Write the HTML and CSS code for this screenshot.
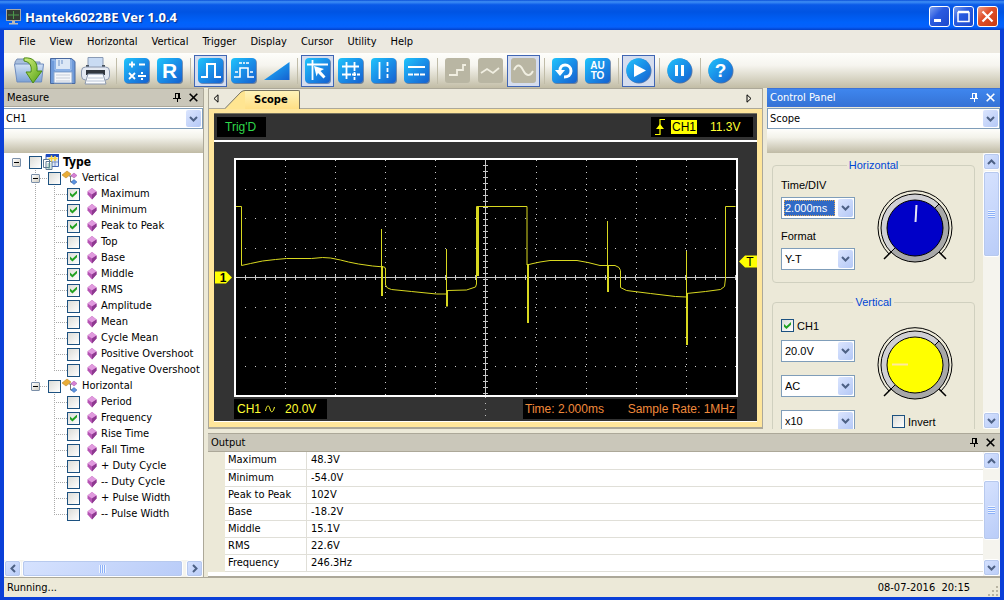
FILE: index.html
```html
<!DOCTYPE html>
<html lang="en">
<head>
    <meta charset="UTF-8">
    <meta name="viewport" content="width=device-width, initial-scale=1.0">
    <title>Hantek6022BE Ver 1.0.4</title>
    <link rel="stylesheet" href="styles.css">
</head>
<body>
    <!-- shared symbols -->
    <svg class="sprite" width="0" height="0">
        <defs>
            <linearGradient id="blue" x1="0" y1="0" x2="1" y2="1">
                <stop offset="0" stop-color="#1fc4fb"/>
                <stop offset="0.5" stop-color="#1a8fe8"/>
                <stop offset="1" stop-color="#1560cf"/>
            </linearGradient>
            <linearGradient id="folderFill" x1="0" y1="0" x2="0" y2="1">
                <stop offset="0" stop-color="#d3e3f6"/>
                <stop offset="1" stop-color="#7ba1d6"/>
            </linearGradient>
            <linearGradient id="greenFill" x1="0" y1="0" x2="1" y2="1">
                <stop offset="0" stop-color="#d4ef7c"/>
                <stop offset="1" stop-color="#4fa012"/>
            </linearGradient>
            <linearGradient id="ring" x1="0" y1="0" x2="1" y2="1">
                <stop offset="0.49" stop-color="#d0d0d4"/>
                <stop offset="0.51" stop-color="#a8a8a8"/>
            </linearGradient>
            <symbol id="chev-down" viewBox="0 0 9 6"><path d="M1 1l3.500 3.500L8 1" fill="none" stroke="#4d6185" stroke-width="2"/></symbol>
            <symbol id="chev-up" viewBox="0 0 9 6"><path d="M1 5l3.500-3.500L8 5" fill="none" stroke="#4d6185" stroke-width="2"/></symbol>
            <symbol id="chev-left" viewBox="0 0 6 9"><path d="M5 1L1.500 4.500L5 8" fill="none" stroke="#4d6185" stroke-width="2"/></symbol>
            <symbol id="chev-right" viewBox="0 0 6 9"><path d="M1 1l3.500 3.500L1 8" fill="none" stroke="#4d6185" stroke-width="2"/></symbol>
            <symbol id="pin" viewBox="0 0 9 9"><path d="M2.500 0v5M2 .5h4M0 5.500h8M4.500 6v3" fill="none" stroke="currentColor"/><path d="M5 0h2v5H5z" fill="currentColor"/></symbol>
            <symbol id="cross" viewBox="0 0 9 9"><path d="M.7.7l7.600 7.600M8.300.7L.7 8.300" fill="none" stroke="currentColor" stroke-width="1.600"/></symbol>
            <symbol id="gem" viewBox="0 0 10 12">
                <path d="M5 0l4.500 3.500v3L5 11.500.5 6.500v-3z" fill="#b653b4"/>
                <path d="M5 0l4.500 3.500L5 6.500.5 3.500z" fill="#e09ade"/>
                <path d="M5 6.500l4.500-3v3L5 11.500z" fill="#8d3a90"/>
            </symbol>
            <symbol id="group" viewBox="0 0 16 16">
                <path d="M0 5l5-4 4 3-5 4z" fill="#e9ad38" stroke="#b9862a" stroke-width=".6"/>
                <path d="M7 6h3M8.500 6v6h2.500" fill="none" stroke="#777"/>
                <path d="M12 3l3 2.500-3 2.500-3-2.500z" fill="#d77fd4" stroke="#a24ea4" stroke-width=".5"/>
                <path d="M12 9.500l3 2.500-3 2.500-3-2.500z" fill="#5d93e0" stroke="#2c5ea9" stroke-width=".5"/>
            </symbol>
            <symbol id="types" viewBox="0 0 16 16">
                <path d="M3 .5h12.500v12H3z" fill="#dfe9fb" stroke="#4466b5"/>
                <path d="M3 0h13v3H3z" fill="#1c4bc0"/>
                <path d="M8.500 3v9M12 3v9M5 8h10" stroke="#8092c4"/>
                <path d="M.5 5.500h6v8h-6zM3 7.500h6v8H3z" fill="#fff" stroke="#5c7893"/>
                <path d="M4.500 10h3M4.500 12h3M4.500 14h3" stroke="#5b9a8d"/>
                <path d="M8.500 1.500v6M5.500 4.500h9M12 2v5" stroke="#ffd83a" stroke-width="1.500"/>
            </symbol>
            <symbol id="tile" viewBox="0 0 26 26"><rect x="1" y="1" width="25" height="25" rx="4" fill="#27508e" opacity=".6"/><rect width="25" height="25" rx="4" fill="url(#blue)"/></symbol>
            <symbol id="tile-off" viewBox="0 0 26 26"><rect width="25" height="25" rx="3" fill="#b9b6a3"/></symbol>
            <symbol id="disc" viewBox="0 0 26 26"><circle cx="13" cy="13" r="12.500" fill="#27508e" opacity=".7"/><circle cx="12.500" cy="12.500" r="12.200" fill="url(#blue)"/></symbol>
        </defs>
    </svg>

    <div class="window">
        <header class="titlebar">
            <svg class="app-icon" viewBox="0 0 16 16">
                <rect x=".5" y=".5" width="14" height="11" fill="#333c33" stroke="#a9a9a9"/>
                <path d="M2 6h11M7.500 2v8" stroke="#4c9a4c"/>
                <path d="M6 12h3v2h3v1.500H3V14h3z" fill="#bbb"/>
            </svg>
            <h1>Hantek6022BE Ver 1.0.4</h1>
            <button type="button" class="win-btn" aria-label="Minimize"><svg viewBox="0 0 19 19"><path d="M4 12h7v3H4z" fill="#fff"/></svg></button>
            <button type="button" class="win-btn" aria-label="Maximize"><svg viewBox="0 0 19 19"><path d="M4 5.500h11v9H4zM4 4.500h11" fill="none" stroke="#fff" stroke-width="1.500"/></svg></button>
            <button type="button" class="win-btn close" aria-label="Close"><svg viewBox="0 0 19 19"><path d="M4.500 4.500l10 10M14.500 4.500l-10 10" fill="none" stroke="#fff" stroke-width="2.200"/></svg></button>
        </header>

        <nav class="menubar">
            <button type="button">File</button>
            <button type="button">View</button>
            <button type="button">Horizontal</button>
            <button type="button">Vertical</button>
            <button type="button">Trigger</button>
            <button type="button">Display</button>
            <button type="button">Cursor</button>
            <button type="button">Utility</button>
            <button type="button">Help</button>
        </nav>

        <div class="toolbar">
            <button type="button" class="tool wide" aria-label="Open">
                <svg viewBox="0 0 31 28">
                    <path d="M1 5l2-3h8l2 3h13v4H1z" fill="#a9bfdd" stroke="#7990b6"/>
                    <path d="M.5 7h29l-2 18H3z" fill="url(#folderFill)" stroke="#6f8cbd"/>
                    <path d="M10 1c9-1 14 4 13 13h5l-9 12-7-11h5c1-6-1-10-7-11z" fill="url(#greenFill)" stroke="#4b8a16"/>
                </svg>
            </button>
            <button type="button" class="tool" aria-label="Save">
                <svg viewBox="0 0 26 26">
                    <path d="M.5.500h21l3.500 3v22H.5z" fill="#6f9bdb" stroke="#49699f"/>
                    <path d="M2 2h3v10h16V2" fill="none" stroke="#a9c7f0"/>
                    <path d="M6 1h14v10H6z" fill="#dce8f6"/><path d="M9 2v6M12 2v4" stroke="#6c92c8"/>
                    <path d="M4 14h18v11H4z" fill="#f4f6fa" stroke="#8ba6cb"/>
                    <path d="M6 17h14M6 20h14M6 23h14" stroke="#c5ccd8"/>
                </svg>
            </button>
            <button type="button" class="tool wide" aria-label="Print">
                <svg viewBox="0 0 31 28">
                    <path d="M8 .5h15v10H8z" fill="#c9dbf3" stroke="#8a9bb5"/>
                    <path d="M6 8h3v4H6zM22 8h3v4h-3z" fill="#4a5560"/>
                    <rect x="1.500" y="10" width="28" height="13" rx="4" fill="#e4e9f2" stroke="#8c98ae"/>
                    <path d="M6 13h19v5H6z" fill="#30363f"/>
                    <path d="M8 17h15l3 10H5z" fill="#fafcff" stroke="#8b98ad"/>
                    <path d="M8 21h15M7 24h17" stroke="#b9c4d6"/>
                </svg>
            </button>
            <span class="sep"></span>
            <button type="button" class="tool" aria-label="Math">
                <svg viewBox="0 0 26 26"><use href="#tile"/><path d="M5 6.500h6M8 3.500v6M15 6.500h6M5 15l6 6M11 15l-6 6M14 18h8" stroke="#fff" stroke-width="1.800"/><path d="M17 14h2v2h-2zM17 20h2v2h-2z" fill="#fff"/></svg>
            </button>
            <button type="button" class="tool" aria-label="Reference">
                <svg viewBox="0 0 26 26"><use href="#tile"/><text x="12.500" y="20" class="glyph-r">R</text></svg>
            </button>
            <span class="sep"></span>
            <button type="button" class="tool on" aria-label="Pulse">
                <svg viewBox="0 0 26 26"><use href="#tile"/><path d="M3 19h6V6h8v13h6" fill="none" stroke="#fff" stroke-width="2"/></svg>
            </button>
            <button type="button" class="tool" aria-label="Dual pulse">
                <svg viewBox="0 0 26 26"><use href="#tile"/><path d="M3 19h6v-9h8v9h6M8 5h3M12 5h2M15 5h3M4 14h3M19 14h3" fill="none" stroke="#fff" stroke-width="1.600"/></svg>
            </button>
            <button type="button" class="tool" aria-label="Ramp">
                <svg viewBox="0 0 26 26"><path d="M25.500 4v18H0z" fill="url(#blue)"/></svg>
            </button>
            <span class="sep"></span>
            <button type="button" class="tool on" aria-label="Cursor tracking">
                <svg viewBox="0 0 26 26"><use href="#tile"/><path d="M2 6.500h21M7.500 2v20" stroke="#fff" stroke-width="1.800"/><path d="M9 8l10 3-3.500 2 5 5.500-2 2-5.500-5.500-1.500 3.500z" fill="#fff"/></svg>
            </button>
            <button type="button" class="tool" aria-label="Cross cursor">
                <svg viewBox="0 0 26 26"><use href="#tile"/><path d="M4 8.500h17M8.500 4v17" stroke="#fff" stroke-width="1.800"/><path d="M4 16.500h18M16.500 4v18" stroke="#fff" stroke-width="1.800" stroke-dasharray="4 1"/></svg>
            </button>
            <button type="button" class="tool" aria-label="Vertical cursor">
                <svg viewBox="0 0 26 26"><use href="#tile"/><path d="M8.500 4v17" stroke="#fff" stroke-width="1.800"/><path d="M16.500 4v18" stroke="#fff" stroke-width="1.800" stroke-dasharray="4 2"/></svg>
            </button>
            <button type="button" class="tool" aria-label="Horizontal cursor">
                <svg viewBox="0 0 26 26"><use href="#tile"/><path d="M4 9h17" stroke="#fff" stroke-width="2"/><path d="M4 16.500h17" stroke="#fff" stroke-width="1.800" stroke-dasharray="5 1"/></svg>
            </button>
            <span class="sep"></span>
            <button type="button" class="tool" aria-label="Step">
                <svg viewBox="0 0 26 26"><use href="#tile-off"/><path d="M4 17h8v-5h6V7h3" fill="none" stroke="#f1efe2" stroke-width="1.800"/></svg>
            </button>
            <button type="button" class="tool" aria-label="Linear">
                <svg viewBox="0 0 26 26"><use href="#tile-off"/><path d="M3 15l6-4 6 4 6-5" fill="none" stroke="#f1efe2" stroke-width="1.800"/></svg>
            </button>
            <button type="button" class="tool on" aria-label="Sine">
                <svg viewBox="0 0 26 26"><use href="#tile-off"/><path d="M3 12c3-6 6-6 9 0s7 7 10 1" fill="none" stroke="#f1efe2" stroke-width="1.800"/></svg>
            </button>
            <span class="sep"></span>
            <button type="button" class="tool" aria-label="Restore">
                <svg viewBox="0 0 26 26"><use href="#tile"/><path d="M8 13c-1-8 11-8 11 0 0 4-3 6-7 6" fill="none" stroke="#fff" stroke-width="3"/><path d="M3 12h10l-5 6z" fill="#fff"/></svg>
            </button>
            <button type="button" class="tool" aria-label="Auto set">
                <svg viewBox="0 0 26 26"><use href="#tile"/><text x="12.500" y="11" class="glyph-auto">AU</text><text x="12.500" y="21" class="glyph-auto">TO</text></svg>
            </button>
            <span class="sep"></span>
            <button type="button" class="tool on" aria-label="Start">
                <svg viewBox="0 0 26 26"><use href="#disc"/><path d="M8 6l12 6.500L8 19z" fill="#fff"/></svg>
            </button>
            <span class="sep"></span>
            <button type="button" class="tool" aria-label="Pause">
                <svg viewBox="0 0 26 26"><use href="#disc"/><path d="M8 7h3v11H8zM14 7h3v11h-3z" fill="#fff"/></svg>
            </button>
            <span class="sep"></span>
            <button type="button" class="tool" aria-label="Help">
                <svg viewBox="0 0 26 26"><use href="#disc"/><text x="12.500" y="19" class="glyph-help">?</text></svg>
            </button>
        </div>

        <main class="workspace">
            <section class="panel measure">
                <div class="panel-head">
                    <h2>Measure</h2>
                    <button type="button" aria-label="Pin"><svg viewBox="0 0 9 9"><use href="#pin"/></svg></button>
                    <button type="button" aria-label="Close"><svg viewBox="0 0 9 9"><use href="#cross"/></svg></button>
                </div>
                <div class="combo"><select aria-label="Measure channel"><option>CH1</option></select><span class="drop"><svg><use href="#chev-down"/></svg></span></div>
                <div class="strip"></div>
                <ul class="tree">
                    <li>
                        <div class="node root"><span class="expander"></span><input type="checkbox" id="type"><svg class="node-icon"><use href="#types"/></svg><label for="type">Type</label></div>
                        <ul class="groups">
                            <li>
                                <div class="node"><span class="expander"></span><input type="checkbox" id="vert"><svg class="node-icon"><use href="#group"/></svg><label for="vert">Vertical</label></div>
                                <ul class="items">
                                    <li><input type="checkbox" id="v1" checked><svg class="gem"><use href="#gem"/></svg><label for="v1">Maximum</label></li>
                                    <li><input type="checkbox" id="v2" checked><svg class="gem"><use href="#gem"/></svg><label for="v2">Minimum</label></li>
                                    <li><input type="checkbox" id="v3" checked><svg class="gem"><use href="#gem"/></svg><label for="v3">Peak to Peak</label></li>
                                    <li><input type="checkbox" id="v4"><svg class="gem"><use href="#gem"/></svg><label for="v4">Top</label></li>
                                    <li><input type="checkbox" id="v5" checked><svg class="gem"><use href="#gem"/></svg><label for="v5">Base</label></li>
                                    <li><input type="checkbox" id="v6" checked><svg class="gem"><use href="#gem"/></svg><label for="v6">Middle</label></li>
                                    <li><input type="checkbox" id="v7" checked><svg class="gem"><use href="#gem"/></svg><label for="v7">RMS</label></li>
                                    <li><input type="checkbox" id="v8"><svg class="gem"><use href="#gem"/></svg><label for="v8">Amplitude</label></li>
                                    <li><input type="checkbox" id="v9"><svg class="gem"><use href="#gem"/></svg><label for="v9">Mean</label></li>
                                    <li><input type="checkbox" id="v10"><svg class="gem"><use href="#gem"/></svg><label for="v10">Cycle Mean</label></li>
                                    <li><input type="checkbox" id="v11"><svg class="gem"><use href="#gem"/></svg><label for="v11">Positive Overshoot</label></li>
                                    <li><input type="checkbox" id="v12"><svg class="gem"><use href="#gem"/></svg><label for="v12">Negative Overshoot</label></li>
                                </ul>
                            </li>
                            <li>
                                <div class="node"><span class="expander"></span><input type="checkbox" id="horiz"><svg class="node-icon"><use href="#group"/></svg><label for="horiz">Horizontal</label></div>
                                <ul class="items">
                                    <li><input type="checkbox" id="h1"><svg class="gem"><use href="#gem"/></svg><label for="h1">Period</label></li>
                                    <li><input type="checkbox" id="h2" checked><svg class="gem"><use href="#gem"/></svg><label for="h2">Frequency</label></li>
                                    <li><input type="checkbox" id="h3"><svg class="gem"><use href="#gem"/></svg><label for="h3">Rise Time</label></li>
                                    <li><input type="checkbox" id="h4"><svg class="gem"><use href="#gem"/></svg><label for="h4">Fall Time</label></li>
                                    <li><input type="checkbox" id="h5"><svg class="gem"><use href="#gem"/></svg><label for="h5">+ Duty Cycle</label></li>
                                    <li><input type="checkbox" id="h6"><svg class="gem"><use href="#gem"/></svg><label for="h6">-- Duty Cycle</label></li>
                                    <li><input type="checkbox" id="h7"><svg class="gem"><use href="#gem"/></svg><label for="h7">+ Pulse Width</label></li>
                                    <li><input type="checkbox" id="h8"><svg class="gem"><use href="#gem"/></svg><label for="h8">-- Pulse Width</label></li>
                                </ul>
                            </li>
                        </ul>
                    </li>
                </ul>
                <div class="scroll-h">
                    <button type="button" class="scroll-btn" aria-label="Scroll left"><svg class="side"><use href="#chev-left"/></svg></button>
                    <div class="thumb"><span class="grip"></span></div>
                    <button type="button" class="scroll-btn" aria-label="Scroll right"><svg class="side"><use href="#chev-right"/></svg></button>
                </div>
            </section>

            <section class="document">
                <div class="tabs">
                    <button type="button" class="tab-arrow" aria-label="Previous tab"><svg viewBox="0 0 6 9"><path d="M5 .8v7.400L1 4.500z" fill="none" stroke="#000"/></svg></button>
                    <button type="button" class="tab">
                        <svg class="slant" viewBox="0 0 20 19"><path d="M0 19L16 2q2-1.500 4-1.500V19z" fill="#ffe591"/><path d="M0 18.500L16 2q2-1.500 4-1.500" fill="none" stroke="#77735f"/></svg>
                        <span>Scope</span>
                    </button>
                    <button type="button" class="tab-arrow next" aria-label="Next tab"><svg viewBox="0 0 6 9"><path d="M1 .8v7.400L5 4.500z" fill="none" stroke="#000"/></svg></button>
                </div>
                <div class="scope">
                    <div class="scope-top">
                        <span class="readout trig">Trig'D</span>
                        <span class="readout level">
                            <svg class="edge" viewBox="0 0 12 18"><path d="M1 16.500h5V1.500h5" fill="none" stroke="#ff0" stroke-width="1.200"/><path d="M2 11h8L6 6z" fill="#ff0"/></svg>
                            <mark>CH1</mark>
                            <span>11.3V</span>
                        </span>
                    </div>
                    <div class="scope-body">
                        <div class="gutter"><svg class="marker channel" viewBox="0 0 18 13"><path d="M1 .5h11l6 6-6 6H1z" fill="#ff0"/><text x="9" y="11">1</text></svg></div>
                        <svg class="plot" viewBox="236 160 500 235" preserveAspectRatio="none">
                            <g class="grid-v">
                                <path d="M285.500 160v235M335.500 160v235M385.500 160v235M435.500 160v235M536.500 160v235M586.500 160v235M636.500 160v235M686.500 160v235"/>
                            </g>
                            <g class="grid-h">
                                <path d="M235 189.500h501M235 218.500h501M235 248.500h501M235 307.500h501M235 337.500h501M235 366.500h501"/>
                            </g>
                            <path class="axis" d="M236 277.500h500M485.500 160v235"/>
                            <path class="ticks-x" d="M235 277.500h501"/>
                            <path class="ticks-y" d="M485.500 165v230"/>
                            <g class="trace">
                                <path d="M236 206.500h5.500v59l9-2 12-2.500 13-1.500 11-1h25l11-1 8 .5 10 2 8 2 10 2 14 2 12 1 1 2v16l2 3 4 1.500 20 2 25 2.500h11v-3.500l19-.5 9-3 1-3V206.500h50.500V265l6-1.500 7-1.500 10-1.500h27l11 2 12 3h15l4 2 1.500 3v17l6 3 24 3 25 3 11 .5v-3.500l19-2 15-2 4-3 1-8V206.500h10"/>
                                <path d="M381.500 229v37M446.500 249v45M607.500 221v44M686.500 251v45"/>
                                <path class="thick" d="M382 266v30M447 290v16.500M478 206v70M528 264v59M608 265v27M687 293v52"/>
                            </g>
                        </svg>
                        <div class="gutter right"><svg class="marker trigger" viewBox="0 0 18 13"><path d="M18 .5H6L0 6.500l6 6h12z" fill="#ff0"/><text x="11" y="11">T</text></svg></div>
                    </div>
                    <div class="scope-foot">
                        <span class="readout source">CH1 <svg viewBox="0 0 10 8"><path d="M.5 6C2-1 4 0 5 4s3 4 4.500-2" fill="none" stroke="#ff3"/></svg> <span>20.0V</span></span>
                        <span class="readout timing"><span>Time: 2.000ms</span><span>Sample Rate: 1MHz</span></span>
                    </div>
                </div>
            </section>

            <section class="panel control">
                <div class="panel-head active">
                    <h2>Control Panel</h2>
                    <button type="button" aria-label="Pin"><svg viewBox="0 0 9 9"><use href="#pin"/></svg></button>
                    <button type="button" aria-label="Close"><svg viewBox="0 0 9 9"><use href="#cross"/></svg></button>
                </div>
                <div class="combo"><select aria-label="Panel"><option>Scope</option></select><span class="drop"><svg><use href="#chev-down"/></svg></span></div>
                <div class="strip"></div>
                <div class="control-body">
                    <div class="control-content">
                        <fieldset>
                            <legend>Horizontal</legend>
                            <div class="fields horizontal-fields">
                                <label for="timediv">Time/DIV</label>
                                <div class="combo small"><select id="timediv" class="focused"><option>2.000ms</option></select><span class="drop"><svg><use href="#chev-down"/></svg></span></div>
                                <label for="format">Format</label>
                                <div class="combo small"><select id="format"><option>Y-T</option></select><span class="drop"><svg><use href="#chev-down"/></svg></span></div>
                            </div>
                            <div class="dial">
                                <svg class="knob time" viewBox="-38 -38 76 76">
                                    <path d="M-26 26A37 37 0 1 1 26 26" fill="none" stroke="#000"/>
                                    <path d="M-24 24l-7 7M24 24l7 7" stroke="#000" stroke-width="1.500"/>
                                    <circle r="34" fill="url(#ring)" stroke="#000"/>
                                    <circle r="28" fill="currentColor" stroke="#000"/>
                                    <path d="M20-20l4-4M-20 20l-4 4" stroke="#000"/>
                                    <path d="M1.500-23L.5-6" stroke="#e4e4f4" stroke-width="2"/>
                                </svg>
                            </div>
                        </fieldset>
                        <fieldset>
                            <legend>Vertical</legend>
                            <div class="fields vertical-fields">
                                <div class="check"><input type="checkbox" id="ch1" checked><label for="ch1">CH1</label></div>
                                <div class="combo small"><select aria-label="Volts per division"><option>20.0V</option></select><span class="drop"><svg><use href="#chev-down"/></svg></span></div>
                                <div class="combo small"><select aria-label="Coupling"><option>AC</option></select><span class="drop"><svg><use href="#chev-down"/></svg></span></div>
                                <div class="combo small"><select aria-label="Probe"><option>x10</option></select><span class="drop"><svg><use href="#chev-down"/></svg></span></div>
                            </div>
                            <div class="dial">
                                <svg class="knob volt" viewBox="-38 -38 76 76">
                                    <path d="M-26 26A37 37 0 1 1 26 26" fill="none" stroke="#000"/>
                                    <path d="M-24 24l-7 7M24 24l7 7" stroke="#000" stroke-width="1.500"/>
                                    <circle r="34" fill="url(#ring)" stroke="#000"/>
                                    <circle r="28" fill="currentColor" stroke="#000"/>
                                    <path d="M20-20l4-4M-20 20l-4 4" stroke="#000"/>
                                    <path d="M-23-.5h16" stroke="#ffe9a0" stroke-width="2"/>
                                </svg>
                                <div class="check invert"><input type="checkbox" id="invert"><label for="invert">Invert</label></div>
                            </div>
                        </fieldset>
                    </div>
                    <div class="scroll-v">
                        <button type="button" class="scroll-btn" aria-label="Scroll up"><svg><use href="#chev-up"/></svg></button>
                        <div class="thumb control-thumb"><span class="grip"></span></div>
                        <button type="button" class="scroll-btn down" aria-label="Scroll down"><svg><use href="#chev-down"/></svg></button>
                    </div>
                </div>
            </section>

            <section class="panel output">
                <div class="panel-head">
                    <h2>Output</h2>
                    <button type="button" aria-label="Pin"><svg viewBox="0 0 9 9"><use href="#pin"/></svg></button>
                    <button type="button" aria-label="Close"><svg viewBox="0 0 9 9"><use href="#cross"/></svg></button>
                </div>
                <div class="output-body">
                    <table>
                        <tr><th scope="row">Maximum</th><td>48.3V</td></tr>
                        <tr><th scope="row">Minimum</th><td>-54.0V</td></tr>
                        <tr><th scope="row">Peak to Peak</th><td>102V</td></tr>
                        <tr><th scope="row">Base</th><td>-18.2V</td></tr>
                        <tr><th scope="row">Middle</th><td>15.1V</td></tr>
                        <tr><th scope="row">RMS</th><td>22.6V</td></tr>
                        <tr><th scope="row">Frequency</th><td>246.3Hz</td></tr>
                    </table>
                    <div class="scroll-v">
                        <button type="button" class="scroll-btn" aria-label="Scroll up"><svg><use href="#chev-up"/></svg></button>
                        <div class="thumb output-thumb"><span class="grip"></span></div>
                        <button type="button" class="scroll-btn down" aria-label="Scroll down"><svg><use href="#chev-down"/></svg></button>
                    </div>
                </div>
            </section>
        </main>

        <footer class="statusbar">
            <span>Running...</span>
            <span class="clock">08-07-2016&nbsp; 20:15</span>
            <svg class="resize" viewBox="0 0 12 12"><path d="M9 1h2v2H9zM5 5h2v2H5zM9 5h2v2H9zM1 9h2v2H1zM5 9h2v2H5zM9 9h2v2H9z" fill="#b8b4a2"/></svg>
        </footer>
    </div>
</body>
</html>
```
FILE: styles.css
```css
* {
    box-sizing: border-box;
}

body {
    margin: 0;
    font-family: "DejaVu Sans Condensed", "DejaVu Sans", sans-serif;
    font-size: 11px;
    line-height: 14px;
    color: #000;
}

h1, h2, ul {
    margin: 0;
    padding: 0;
    list-style: none;
}

button {
    padding: 0;
    border: 0;
    background: none;
    font: inherit;
    color: inherit;
}

svg {
    display: block;
    flex: none;
}

.sprite {
    position: absolute;
}

.window {
    display: flex;
    flex-direction: column;
    height: 100vh;
    border: solid #0a3fd8;
    border-width: 0 4px 3px;
    background: #ece9d8;
}

/* title bar */
.titlebar {
    display: flex;
    align-items: center;
    gap: 3px;
    flex: none;
    height: 30px;
    margin: 0 -4px;
    padding: 3px 6px 0;
    background: linear-gradient(#0a4fd8 0, #3f8ff5 6%, #0a5ae8 16%, #0054e3 40%, #0062fb 75%, #0560fb 90%, #0340c8 100%);
}

.app-icon {
    width: 16px;
    height: 16px;
}

h1 {
    flex: 1;
    font-family: "Open Sans", sans-serif;
    font-size: 13px;
    line-height: 18px;
    color: #fff;
    text-shadow: 1px 1px 1px #0a2c86;
}

.win-btn {
    width: 21px;
    height: 21px;
    border: 1px solid #fff;
    border-radius: 3px;
    background: linear-gradient(135deg, #7fa2f0, #2a5be0 40%, #1c48cc);
}

.win-btn.close {
    background: linear-gradient(135deg, #f0a08a, #e0512c 40%, #c83a10);
}

/* menu and toolbar */
.menubar {
    display: flex;
    flex: none;
    height: 23px;
    padding-left: 8px;
    background: #ece9e0;
}

.menubar button {
    padding: 0 7px;
}

.toolbar {
    display: flex;
    align-items: center;
    flex: none;
    height: 35px;
    padding-left: 9px;
    background: linear-gradient(#fefefb, #f6f5ef 35%, #c2bda6);
}

.tool {
    display: flex;
    align-items: center;
    justify-content: center;
    width: 33px;
    height: 32px;
}

.tool svg {
    width: 26px;
    height: 26px;
}

.tool.wide svg {
    width: 31px;
    height: 28px;
}

.tool.on {
    border: 1px solid #4066b4;
    background: #d5ddee;
}

.sep {
    width: 8px;
    height: 26px;
    background: linear-gradient(#c0bca8, #c0bca8) 50% 0 / 1px 100% no-repeat;
}

.glyph-r, .glyph-help, .glyph-auto {
    font-family: "Liberation Sans", sans-serif;
    font-weight: bold;
    text-anchor: middle;
    fill: #fff;
}

.glyph-r {
    font-size: 21px;
}

.glyph-help {
    font-size: 19px;
}

.glyph-auto {
    font-size: 10px;
}

/* docked panels */
.workspace {
    display: grid;
    grid-template: "measure document control" 1fr "measure output output" 144px / 200px 1fr 233px;
    gap: 4px;
    flex: 1;
    min-height: 0;
}

.panel {
    display: flex;
    flex-direction: column;
    min-width: 0;
    min-height: 0;
    overflow: hidden;
}

.measure {
    grid-area: measure;
    border-right: 1px solid #aca899;
    background: #fff;
}

.document {
    grid-area: document;
}

.control {
    grid-area: control;
}

.output {
    grid-area: output;
}

.panel-head {
    display: flex;
    align-items: center;
    gap: 7px;
    flex: none;
    height: 19px;
    padding: 0 5px 0 3px;
    border: solid #aca899;
    border-width: 1px 0;
    background: #cac7ba;
}

.panel-head.active {
    border-color: #3a72d8;
    background: linear-gradient(#3f86ee, #3573d6);
    color: #fff;
}

.panel-head h2 {
    flex: 1;
    font-size: 11px;
    font-weight: normal;
}

.panel-head svg {
    width: 9px;
    height: 9px;
}

.combo {
    display: flex;
    flex: none;
    height: 21px;
    margin-top: 1px;
    padding: 1px;
    border: 1px solid #7f9db9;
    background: #fff;
}

.combo select {
    flex: 1;
    min-width: 0;
    padding: 0 1px;
    border: 0;
    appearance: none;
    background: none;
    font: inherit;
    color: inherit;
}

.measure .combo {
    border-left: 0;
}

.drop {
    display: grid;
    place-items: center;
    width: 15px;
    border-radius: 2px;
    background: linear-gradient(135deg, #dbe5fe, #b4c8f6);
}

.drop svg, .scroll-btn svg {
    width: 9px;
    height: 6px;
}

.strip {
    flex: none;
    height: 24px;
    background: linear-gradient(#fefefb, #f3f2ea 35%, #c0bba5);
}

/* check boxes */
input[type="checkbox"] {
    display: grid;
    place-items: center;
    flex: none;
    width: 13px;
    height: 13px;
    margin: 0;
    border: 1px solid #1c5180;
    appearance: none;
    background: linear-gradient(135deg, #dcdcd7, #fff);
}

input[type="checkbox"]:checked::before {
    content: "";
    width: 7px;
    height: 7px;
    background: #21a121;
    clip-path: polygon(0 30%, 35% 62%, 100% 0, 100% 38%, 35% 100%, 0 68%);
}

/* measure tree */
.tree {
    flex: 1;
    padding: 1px 0 0 8px;
    overflow: hidden;
    white-space: nowrap;
}

.node {
    display: flex;
    align-items: center;
    height: 16px;
    background: repeating-linear-gradient(90deg, #aaa 0 1px, transparent 1px 2px) 9px 50% / 9px 1px no-repeat;
}

.node.root {
    background: none;
    font-size: 12px;
    font-weight: bold;
}

.expander {
    width: 9px;
    height: 9px;
    margin-right: 8px;
    border: 1px solid #7b8fa8;
    border-radius: 1px;
    background: linear-gradient(#000, #000) 50% 50% / 5px 1px no-repeat, linear-gradient(135deg, #fff, #d2cec2);
}

.node-icon {
    width: 16px;
    height: 16px;
    margin: 0 4px 0 1px;
}

.groups {
    padding-left: 19px;
}

.groups > li {
    background: repeating-linear-gradient(#aaa 0 1px, transparent 1px 2px) 4px 0 / 1px 100% no-repeat;
}

.groups > li:last-child {
    background-size: 1px 8px;
}

.items {
    padding-left: 23px;
}

.items li {
    display: flex;
    align-items: center;
    height: 16px;
    padding-left: 13px;
    background:
        repeating-linear-gradient(#aaa 0 1px, transparent 1px 2px) 0 0 / 1px 100% no-repeat,
        repeating-linear-gradient(90deg, #aaa 0 1px, transparent 1px 2px) 0 50% / 13px 1px no-repeat;
}

.items li:last-child {
    background-size: 1px 8px, 13px 1px;
}

.gem {
    width: 10px;
    height: 12px;
    margin: 0 4px 0 7px;
}

/* scroll bars */
.scroll-h, .scroll-v {
    display: flex;
    flex: none;
    gap: 1px;
    background: #f5f4ee;
}

.scroll-h {
    height: 17px;
}

.scroll-v {
    flex-direction: column;
    width: 17px;
}

.scroll-btn, .thumb {
    display: grid;
    place-items: center;
    border: 1px solid #fff;
    border-radius: 3px;
    outline: 1px solid #b7c9ee;
    outline-offset: -2px;
    background: linear-gradient(135deg, #d6e2fe, #b9ccf8);
}

.scroll-btn {
    flex: none;
    width: 17px;
    height: 17px;
}

.scroll-btn .side {
    width: 6px;
    height: 9px;
}

.scroll-btn.down {
    margin-top: auto;
}

.scroll-h .thumb {
    flex: 1;
    margin-right: 2px;
}

.scroll-v .thumb {
    flex: none;
}

.control-thumb {
    height: 86px;
}

.output-thumb {
    height: 60px;
    margin-top: 10px;
}

.grip {
    width: 7px;
    height: 8px;
    background: repeating-linear-gradient(#eef4fe 0 1px, #8cb0f8 1px 2px);
}

.scroll-h .grip {
    background: repeating-linear-gradient(90deg, #eef4fe 0 1px, #8cb0f8 1px 2px);
}

/* scope document */
.document {
    display: flex;
    flex-direction: column;
    min-width: 0;
    border: solid #aca899;
    border-width: 1px 1px 2px;
}

.tabs {
    display: flex;
    align-items: flex-end;
    flex: none;
    height: 20px;
    padding: 0 10px 0 4px;
    border-bottom: 1px solid #aca899;
    background: #ece9dc;
}

.tab-arrow {
    align-self: center;
}

.tab-arrow svg {
    width: 6px;
    height: 9px;
}

.tab-arrow.next {
    margin-left: auto;
}

.tab {
    display: flex;
    height: 19px;
    margin: 0 0 -1px 6px;
    font-weight: bold;
    line-height: 18px;
}

.slant {
    width: 20px;
    height: 19px;
}

.tab span {
    padding: 0 11px 0 9px;
    border: solid #77735f;
    border-width: 1px 1px 0 0;
    border-radius: 0 2px 0 0;
    background: linear-gradient(#fff3b8, #ffdf85);
}

.scope {
    display: flex;
    flex-direction: column;
    flex: 1;
    min-height: 0;
    padding: 4px 5px 5px;
    background: #ffe69b;
    font-family: "Liberation Sans", Arial, sans-serif;
    font-size: 12px;
}

.scope-top {
    display: flex;
    justify-content: space-between;
    align-items: center;
    flex: none;
    height: 29px;
    padding: 0 4px 0 3px;
    border-top: 1px solid #77735f;
    border-bottom: 2px solid #fff;
    background: #333;
}

.readout {
    display: flex;
    align-items: center;
    height: 20px;
    background: #000;
}

.trig {
    padding: 0 10px 0 8px;
    color: #2fd84a;
}

.level {
    width: 102px;
    padding-left: 3px;
    color: #ff3;
}

.edge {
    width: 12px;
    height: 18px;
}

mark {
    margin: 0 13px 0 5px;
    padding: 0 1px;
    background: #ff0;
    color: #000;
}

.scope-body {
    display: flex;
    flex: 1;
    min-height: 0;
    padding-top: 16px;
    background: #333;
}

.gutter {
    flex: none;
    width: 20px;
}

.gutter.right {
    width: 19px;
}

.marker {
    width: 18px;
    height: 13px;
}

.marker text {
    font-size: 12px;
    text-anchor: middle;
}

.channel {
    margin-top: 113px;
    font-weight: bold;
}

.trigger {
    margin: 97px 0 0 1px;
}

.plot {
    flex: 1;
    min-width: 0;
    height: 100%;
    border: 2px solid #fff;
    background: #000;
}

.grid-v, .grid-h, .axis, .ticks-x, .ticks-y {
    fill: none;
    stroke: #c8c8c8;
}

.grid-v {
    stroke-dasharray: 1 5;
}

.grid-h {
    stroke-dasharray: 1 9;
}

.ticks-x {
    stroke-width: 5;
    stroke-dasharray: 1 9;
}

.ticks-y {
    stroke-width: 5;
    stroke-dasharray: 1 5;
}

.trace {
    fill: none;
    stroke: #d8d820;
}

.trace .thick {
    stroke-width: 2;
}

.scope-foot {
    display: flex;
    justify-content: space-between;
    align-items: center;
    flex: none;
    height: 25px;
    padding: 0 20px;
    border-bottom: 1px solid #fff;
    background: repeating-linear-gradient(#bbb 0 1px, transparent 1px 6px) 50% 0 / 1px 100% no-repeat, #333;
}

.source {
    gap: 4px;
    width: 93px;
    padding-left: 3px;
    color: #ff3;
}

.source svg {
    width: 10px;
    height: 8px;
}

.source span {
    margin-left: 6px;
}

.timing {
    justify-content: space-between;
    width: 214px;
    padding: 0 2px;
    color: #f08a3c;
}

/* control panel */
.control-body {
    display: flex;
    flex: 1;
    min-height: 0;
}

.control-content {
    flex: 1;
    min-width: 0;
    padding: 5px 8px 0 5px;
    overflow: hidden;
    font-family: "Liberation Sans", Arial, sans-serif;
}

fieldset {
    display: grid;
    grid-template-columns: 74px 76px;
    column-gap: 22px;
    min-width: 0;
    margin: 0 0 12px;
    padding: 0 8px;
    border: 1px solid #d0d0bf;
    border-radius: 4px;
}

legend {
    margin: 0 auto;
    padding: 0 2px;
    color: #0046d5;
}

.fields {
    display: flex;
    flex-direction: column;
}

.horizontal-fields {
    gap: 5px;
    padding: 6px 0 12px;
}

.horizontal-fields .combo + label {
    margin-top: 5px;
}

.vertical-fields {
    gap: 13px;
    padding: 10px 0 12px;
}

.vertical-fields .check {
    margin-bottom: -5px;
}

.combo.small {
    height: 22px;
    margin-top: 0;
}

.combo.small select {
    padding: 0 2px;
}

.combo.small .focused {
    margin: 1px 3px 1px 1px;
    padding: 0 1px;
    outline: 1px dotted #d8a45c;
    outline-offset: -1px;
    background: #316ac5;
    color: #fff;
}

.check {
    display: flex;
    align-items: center;
    gap: 3px;
    height: 13px;
}

.dial {
    padding-top: 18px;
}

.knob {
    width: 76px;
    height: 76px;
}

.knob.time {
    color: #0000c8;
}

.knob.volt {
    color: #ff0;
}

.invert {
    margin: 12px 0 0 15px;
}

/* output */
.output-body {
    display: flex;
    flex: 1;
    min-height: 0;
    border-bottom: 1px solid #aca899;
    background: #fff;
}

table {
    flex: 1;
    align-self: flex-start;
    border-collapse: collapse;
    border-left: 17px solid #ece9d8;
}

tr {
    height: 17px;
    border-bottom: 1px solid #e0dfd8;
}

th {
    width: 90px;
    padding: 0 3px;
    border-right: 1px solid #e0dfd8;
    font-weight: normal;
    text-align: left;
    white-space: nowrap;
}

td {
    padding: 0 4px;
}

/* status bar */
.statusbar {
    display: flex;
    align-items: center;
    flex: none;
    height: 20px;
    padding: 0 1px 0 3px;
    border-top: 1px solid #aca899;
    background: #ece9d8;
}

.clock {
    margin-left: auto;
}

.resize {
    align-self: flex-end;
    width: 12px;
    height: 12px;
    margin-left: 17px;
}
```
